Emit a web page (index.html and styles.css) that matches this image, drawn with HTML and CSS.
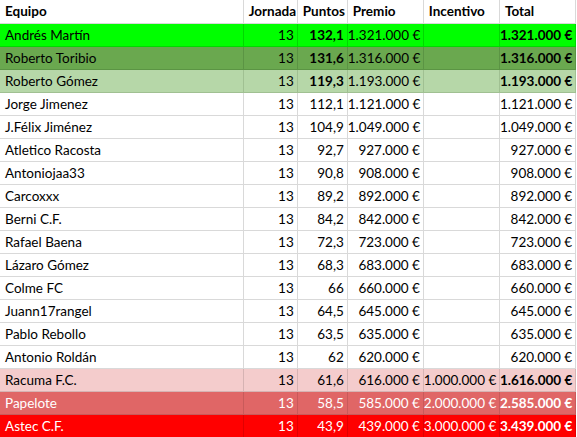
FILE: index.html
```html
<!DOCTYPE html>
<html lang="es">
<head>
<meta charset="utf-8">
<link rel="stylesheet" href="styles.css">
</head>
<body>
<table class="sheet">
  <colgroup>
    <col class="c-team"><col class="c-jor"><col class="c-pts"><col class="c-money"><col class="c-money"><col class="c-money">
  </colgroup>
  <thead>
    <tr class="head"><th>Equipo</th><th>Jornada</th><th>Puntos</th><th>Premio</th><th>Incentivo</th><th>Total</th></tr>
  </thead>
  <tbody>
    <tr class="g1"><td>Andrés Martín</td><td class="num">13</td><td class="num b">132,1</td><td class="num">1.321.000 €</td><td></td><td class="num b">1.321.000 €</td></tr>
    <tr class="g2"><td>Roberto Toribio</td><td class="num">13</td><td class="num b">131,6</td><td class="num">1.316.000 €</td><td></td><td class="num b">1.316.000 €</td></tr>
    <tr class="g3"><td>Roberto Gómez</td><td class="num">13</td><td class="num b">119,3</td><td class="num">1.193.000 €</td><td></td><td class="num b">1.193.000 €</td></tr>
    <tr><td>Jorge Jimenez</td><td class="num">13</td><td class="num">112,1</td><td class="num">1.121.000 €</td><td></td><td class="num">1.121.000 €</td></tr>
    <tr><td>J.Félix Jiménez</td><td class="num">13</td><td class="num">104,9</td><td class="num">1.049.000 €</td><td></td><td class="num">1.049.000 €</td></tr>
    <tr><td>Atletico Racosta</td><td class="num">13</td><td class="num">92,7</td><td class="num">927.000 €</td><td></td><td class="num">927.000 €</td></tr>
    <tr><td>Antoniojaa33</td><td class="num">13</td><td class="num">90,8</td><td class="num">908.000 €</td><td></td><td class="num">908.000 €</td></tr>
    <tr><td>Carcoxxx</td><td class="num">13</td><td class="num">89,2</td><td class="num">892.000 €</td><td></td><td class="num">892.000 €</td></tr>
    <tr><td>Berni C.F.</td><td class="num">13</td><td class="num">84,2</td><td class="num">842.000 €</td><td></td><td class="num">842.000 €</td></tr>
    <tr><td>Rafael Baena</td><td class="num">13</td><td class="num">72,3</td><td class="num">723.000 €</td><td></td><td class="num">723.000 €</td></tr>
    <tr><td>Lázaro Gómez</td><td class="num">13</td><td class="num">68,3</td><td class="num">683.000 €</td><td></td><td class="num">683.000 €</td></tr>
    <tr><td>Colme FC</td><td class="num">13</td><td class="num">66</td><td class="num">660.000 €</td><td></td><td class="num">660.000 €</td></tr>
    <tr><td>Juann17rangel</td><td class="num">13</td><td class="num">64,5</td><td class="num">645.000 €</td><td></td><td class="num">645.000 €</td></tr>
    <tr><td>Pablo Rebollo</td><td class="num">13</td><td class="num">63,5</td><td class="num">635.000 €</td><td></td><td class="num">635.000 €</td></tr>
    <tr><td>Antonio Roldán</td><td class="num">13</td><td class="num">62</td><td class="num">620.000 €</td><td></td><td class="num">620.000 €</td></tr>
    <tr class="r1"><td>Racuma F.C.</td><td class="num">13</td><td class="num">61,6</td><td class="num">616.000 €</td><td class="num">1.000.000 €</td><td class="num b">1.616.000 €</td></tr>
    <tr class="r2"><td>Papelote</td><td class="num">13</td><td class="num">58,5</td><td class="num">585.000 €</td><td class="num">2.000.000 €</td><td class="num b">2.585.000 €</td></tr>
    <tr class="r3"><td>Astec C.F.</td><td class="num">13</td><td class="num">43,9</td><td class="num">439.000 €</td><td class="num">3.000.000 €</td><td class="num b">3.439.000 €</td></tr>
  </tbody>
</table>
</body>
</html>
```

FILE: styles.css
```css
html, body {
  margin: 0;
  padding: 0;
  background: #ffffff;
}

.sheet {
  border-collapse: collapse;
  table-layout: fixed;
  width: 576px;
  font-family: "Lato", "Liberation Sans", sans-serif;
  font-size: 13.5px;
  color: #000000;
}

.c-team { width: 243px; }
.c-jor { width: 54px; }
.c-pts { width: 50px; }
.c-money { width: 76px; }

.sheet th,
.sheet td {
  height: 23px;
  padding: 0 3px 0 5px;
  border: 1px solid #d9d9d9;
  text-align: left;
  white-space: nowrap;
  overflow: visible;
  line-height: 22px;
  box-sizing: border-box;
}

.sheet th {
  font-weight: 700;
  border-top: none;
}

.sheet tr > :first-child { border-left: none; }

.sheet td.num {
  text-align: right;
  padding: 0 3px 0 0;
}

.sheet td.b { font-weight: 700; }

.g1 td { background: #00ff00; border-color: #00d800; }
.g2 td { background: #6aa84f; border-color: #5b9444; }
.g3 td { background: #b6d7a8; border-color: #a0c092; }
.r1 td { background: #f4cccc; border-color: #d6b3b3; }
.r2 td { background: #e06666; border-color: #c85a5a; color: #ffffff; }
.r3 td { background: #ff0000; border-color: #e00000; color: #ffffff; }
```
